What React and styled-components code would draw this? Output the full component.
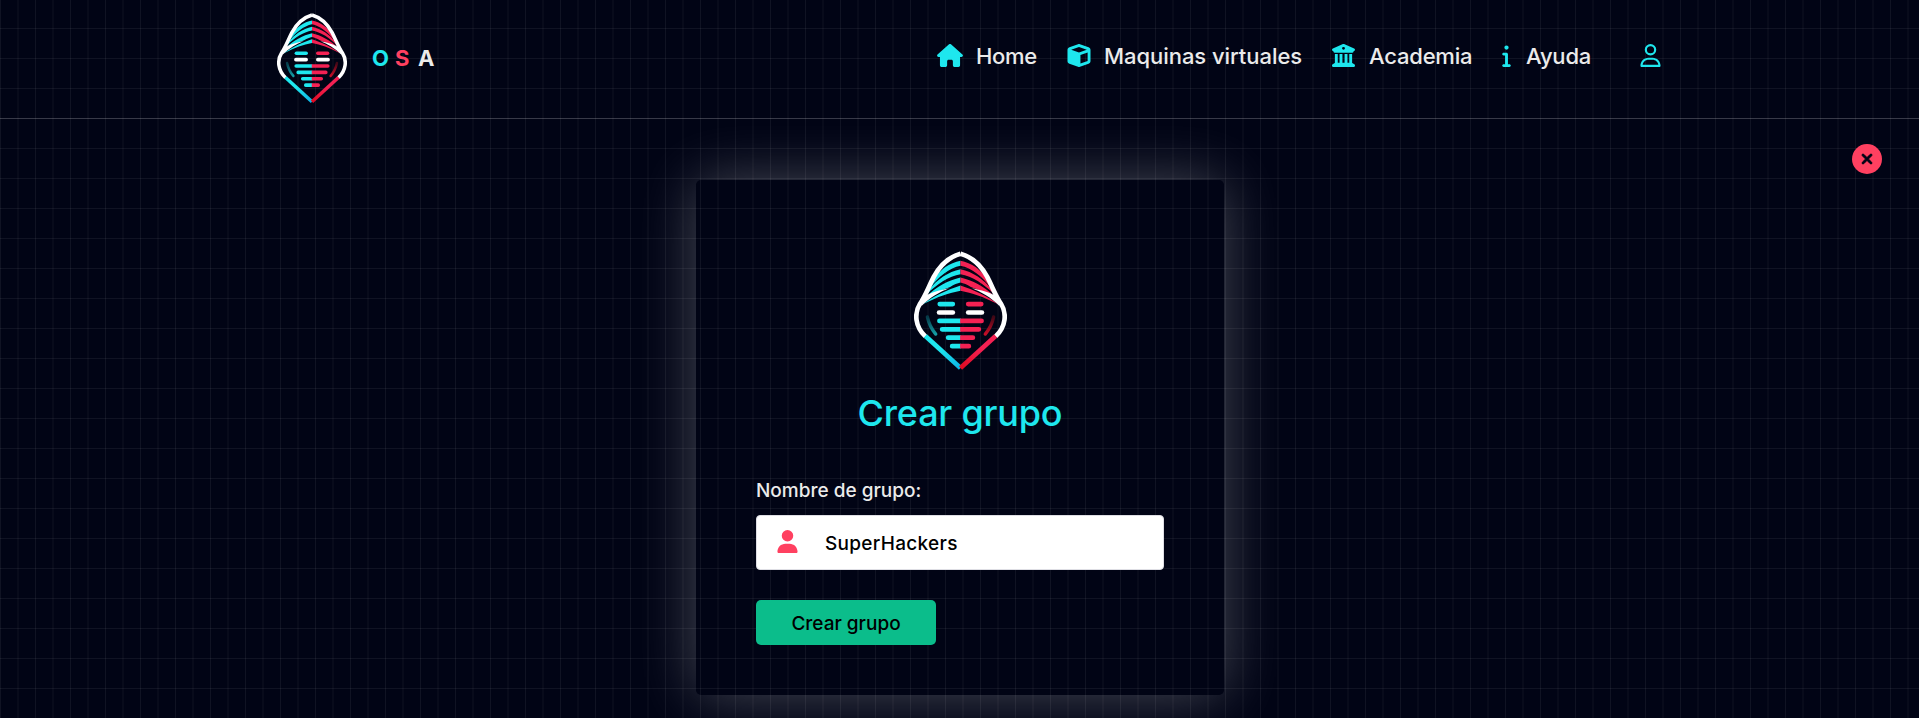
import React from "react";
import styled, { createGlobalStyle } from "styled-components";
import { FaHouse, FaCube, FaBuildingColumns, FaInfo, FaRegUser, FaUser, FaXmark } from "react-icons/fa6";

const GlobalStyle = createGlobalStyle`
  * { box-sizing: border-box; }
  body { margin: 0; background: #010415; overflow: hidden; }
`;

const Page = styled.div`
  height: 718px;
  overflow: hidden;
  font-family: Inter, "Open Sans", sans-serif;
  color: #ebebeb;
  background-image:
    linear-gradient(90deg, rgba(255, 255, 255, 0.06) 1px, transparent 1px),
    linear-gradient(90deg, rgba(255, 255, 255, 0.028) 2px, transparent 2px),
    linear-gradient(rgba(255, 255, 255, 0.06) 1px, transparent 1px);
  background-size: 35px 30px, 35px 30px, 30px 30px;
  background-position: 0 0, 17px 0, 0 28px;
`;

const Header = styled.header`
  height: 119px;
  padding: 0 254px 5px 277px;
  display: flex;
  align-items: center;
  justify-content: space-between;
  border-bottom: 1px solid rgba(255, 255, 255, 0.17);
`;

const Brand = styled.a`
  display: flex;
  align-items: center;
  gap: 25px;
  padding-top: 3px;
`;

const BrandName = styled.span`
  display: flex;
  gap: 7px;
  font-size: 22px;
  line-height: 26px;
  font-weight: 700;
`;

const Letter = styled.span`
  width: 16px;
  color: ${(p) => p.$color};
`;

const Nav = styled.nav`
  display: flex;
  align-items: center;
  padding-bottom: 1px;
`;

const NavLink = styled.a`
  display: flex;
  align-items: center;
  gap: ${(p) => p.$gap}px;
  width: ${(p) => p.$width}px;
  font-size: 22px;
  line-height: 26px;
  font-weight: 500;
  white-space: nowrap;
  letter-spacing: ${(p) => p.$track || 0}px;
  svg { color: #1ee7ee; flex: none; height: 23px; width: ${(p) => p.$icon}px; margin-bottom: 2px; }
`;

const Main = styled.main`
  display: grid;
  grid-template-columns: 696px 528px 1fr;
  align-items: start;
`;

const Card = styled.section`
  grid-column: 2;
  margin-top: 61px;
  height: 515px;
  padding: 71px 60px 0;
  border-radius: 5px;
  box-shadow: 0 0 60px rgba(255, 255, 255, 0.28);
  display: flex;
  flex-direction: column;
  align-items: flex-start;
`;

const CloseButton = styled.button`
  justify-self: end;
  margin: 25px 37px 0 0;
  width: 30px;
  height: 30px;
  padding: 0;
  border: 0;
  border-radius: 50%;
  background: #ff4060;
  color: #010415;
  display: grid;
  place-items: center;
  svg { width: 16px; height: 16px; stroke: currentColor; stroke-width: 32px; }
`;

const LogoSvg = styled.svg`
  display: block;
  flex: none;
  width: ${(p) => p.$w}px;
  height: ${(p) => p.$h}px;
`;

const CardLogo = styled.div`
  align-self: center;
`;

const Title = styled.h1`
  align-self: center;
  margin: 20px 0 0;
  font-size: 36px;
  line-height: 44px;
  font-weight: 500;
  letter-spacing: -0.2px;
  color: #1ee7ee;
`;

const Label = styled.label`
  margin-top: 44px;
  font-size: 19px;
  line-height: 24px;
  font-weight: 500;
`;

const Field = styled.div`
  margin-top: 12px;
  width: 408px;
  height: 55px;
  border: 1px solid #dedee4;
  border-radius: 4px;
  background: #fff;
  padding-left: 20px;
  display: flex;
  align-items: center;
  gap: 27px;
  svg { width: 21px; height: 23px; color: #ff4060; flex: none; margin-bottom: 2px; }
`;

const Input = styled.input`
  border: 0;
  outline: 0;
  padding: 2px 0 0;
  width: 300px;
  background: transparent;
  color: #000;
  font: 500 19px/24px Inter, sans-serif;
  letter-spacing: 0.3px;
`;

const Submit = styled.button`
  margin-top: 30px;
  width: 180px;
  height: 45px;
  padding: 2px 0 0;
  border: 0;
  border-radius: 5px;
  background: #0bbd8b;
  color: #000;
  font: 500 19px/24px Inter, sans-serif;
`;

function HoodHalf({ stripe, fade }) {
  return (
    <>
      <g fill={stripe}>
        <path d="M181 62C149 68 117 88 99 123L92 140C113 112 149 83 181 77Z" />
        <path d="M181 87C144 95 111 117 87 148L80 162C108 133 147 107 181 102Z" />
        <path d="M181 112C146 120 108 140 82 166L150 140C162 133 171 129 181 127Z" />
        <path d="M181 136C143 148 99 169 66 193L76 188C111 169 147 158 181 151Z" />
      </g>
      <path d="M74 169C91 156 121 149 147 144C120 154 89 172 64 197Z" fill="#fff" />
      <path d="M181 41C146 51 119 77 101 110C84 143 76 167 60 190C42 218 45 258 76 287" fill="none" stroke="#fff" strokeWidth="14" />
      <path d="M76 286L181 381" fill="none" stroke={`url(#${fade}-chin)`} strokeWidth="14" />
      <path d="M82 229C86 248 93 264 107 280" fill="none" stroke={`url(#${fade}-cheek)`} strokeWidth="10" strokeLinecap="round" />
      <g fill={stripe}>
        <rect x="112" y="184" width="53" height="14" rx="7" />
        <path d="M182 234H118a7 7 0 0 0 0 14H182zM182 259H126a7 7 0 0 0 0 14H182zM182 284H144a7 7 0 0 0 0 14H182zM182 309H156a7 7 0 0 0 0 14H182z" />
      </g>
      <rect x="110" y="209" width="55" height="14" rx="7" fill="#fff" />
    </>
  );
}

function Logo({ id, w, h }) {
  const sides = [
    { key: `${id}-l`, bright: "#1ee7ee", chin: "#0cb4e5", dim: "#063a48", lit: "#149ca5" },
    { key: `${id}-r`, bright: "#f42153", chin: "#e00a20", dim: "#400816", lit: "#c50e27" },
  ];
  return (
    <LogoSvg $w={w} $h={h} viewBox="42 33 278 357" preserveAspectRatio="none">
      <defs>
        {sides.map((s) => (
          <React.Fragment key={s.key}>
            <linearGradient id={`${s.key}-chin`} x1="0" y1="0" x2="1" y2="1">
              <stop offset="0.4" stopColor={s.bright} />
              <stop offset="1" stopColor={s.chin} />
            </linearGradient>
            <linearGradient id={`${s.key}-cheek`} x1="0" y1="0" x2="0" y2="1">
              <stop offset="0" stopColor={s.dim} />
              <stop offset="1" stopColor={s.lit} />
            </linearGradient>
          </React.Fragment>
        ))}
      </defs>
      <HoodHalf stripe={sides[0].bright} fade={sides[0].key} />
      <g transform="translate(362 0) scale(-1 1)">
        <HoodHalf stripe={sides[1].bright} fade={sides[1].key} />
      </g>
    </LogoSvg>
  );
}

export default function App() {
  return (
    <>
      <GlobalStyle />
      <Page>
        <Header>
          <Brand>
            <Logo id="brand" w={70} h={91} />
            <BrandName>
              <Letter $color="#1ee7ee">O</Letter>
              <Letter $color="#ff4060">S</Letter>
              <Letter $color="#ebebeb">A</Letter>
            </BrandName>
          </Brand>
          <Nav>
            <NavLink $icon={26} $gap={13} $width={130} $track={-0.3}><FaHouse />Home</NavLink>
            <NavLink $icon={24} $gap={13} $width={265} $track={-0.05}><FaCube />Maquinas virtuales</NavLink>
            <NavLink $icon={23} $gap={14} $width={170} $track={-0.2}><FaBuildingColumns />Academia</NavLink>
            <NavLink $icon={9} $gap={15} $width={138} $track={-0.2}><FaInfo />Ayuda</NavLink>
            <NavLink $icon={21} $gap={0} $width={25}><FaRegUser /></NavLink>
          </Nav>
        </Header>
        <Main>
          <Card>
            <CardLogo><Logo id="card" w={93} h={120} /></CardLogo>
            <Title>Crear grupo</Title>
            <Label htmlFor="group">Nombre de grupo:</Label>
            <Field>
              <FaUser />
              <Input id="group" defaultValue="SuperHackers" />
            </Field>
            <Submit>Crear grupo</Submit>
          </Card>
          <CloseButton aria-label="Cerrar"><FaXmark /></CloseButton>
        </Main>
      </Page>
    </>
  );
}
